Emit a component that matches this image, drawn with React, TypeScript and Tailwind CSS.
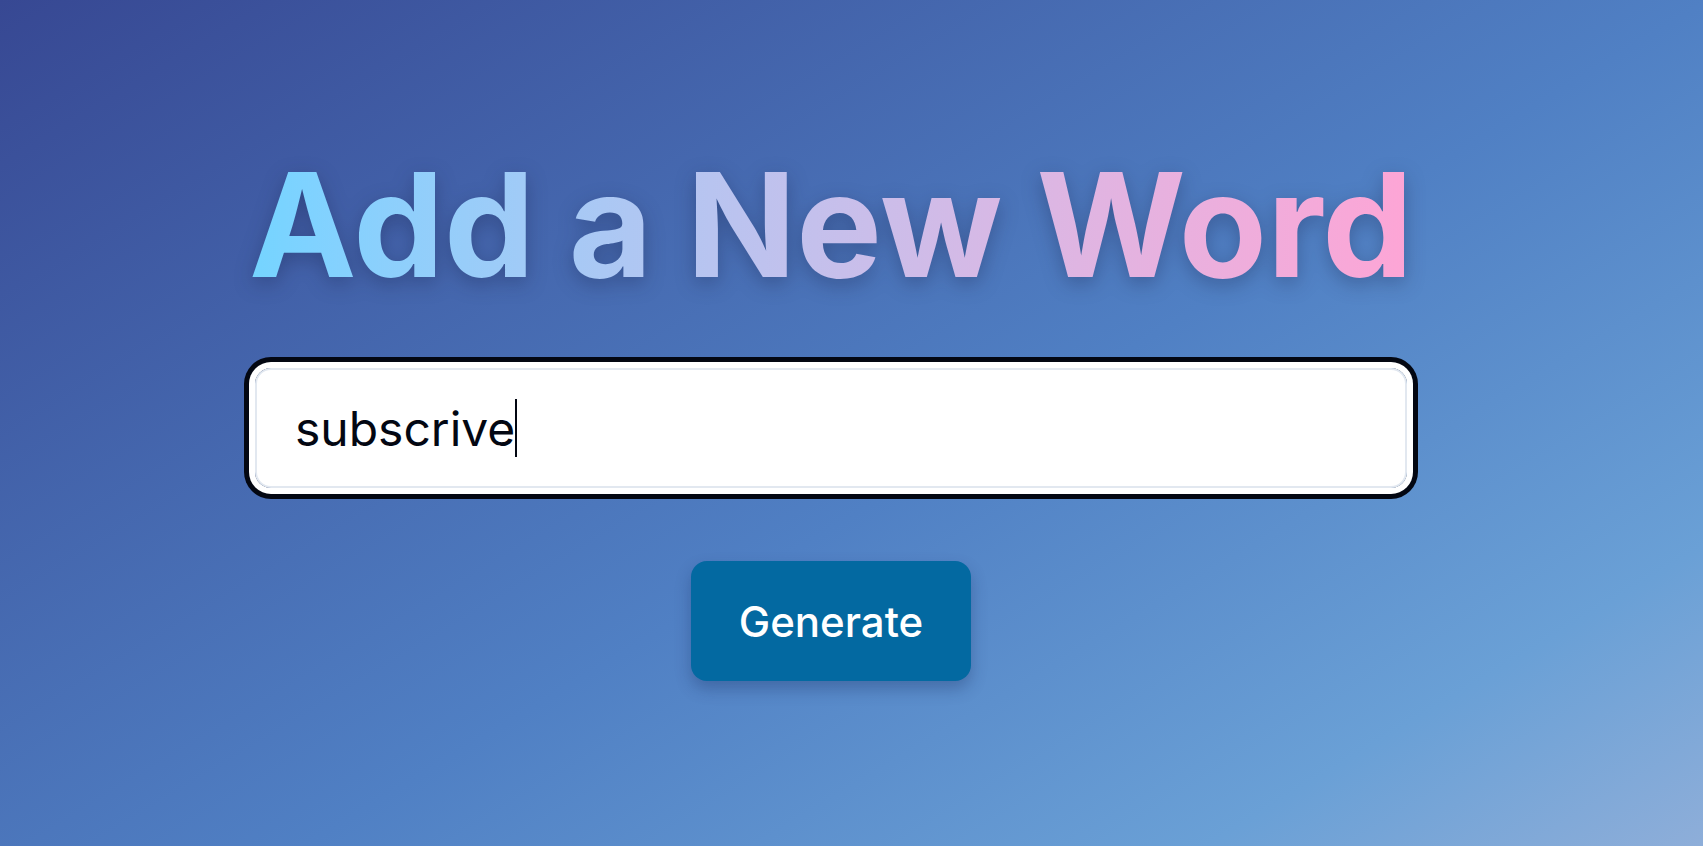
import { useState } from "react";

export default function App() {
  const [word, setWord] = useState("subscrive");

  return (
    <div className="min-h-screen w-full bg-[linear-gradient(149deg,#374893_0%,#5080c4_55%,#6aa0d6_84%,#8eaed9_100%)]">
      <div className="flex flex-col items-center pr-[41px] pt-[153px]">
        {/* Title */}
        <h1 className="bg-gradient-to-r from-sky-300 to-pink-300 bg-clip-text font-['Inter',sans-serif] text-[144px] font-bold leading-none text-transparent drop-shadow-[0_6px_10px_rgba(15,23,60,0.3)]">
          Add a New Word
        </h1>

        {/* Word input, caret drawn on top so it shows in a still frame */}
        <div className="relative mt-[71px] rounded-2xl ring-[5px] ring-gray-950 ring-offset-[6px] ring-offset-white">
          <input
            type="text"
            value={word}
            onChange={(e) => setWord(e.target.value)}
            className="block h-[120px] w-[1152px] rounded-2xl border-2 border-slate-200 bg-white pl-[38px] pr-6 font-['Inter',sans-serif] text-[48px] leading-normal text-gray-950 caret-transparent outline-none"
          />
          <div className="pointer-events-none absolute inset-0 flex items-center pl-[40px] font-['Inter',sans-serif] text-[48px] leading-normal">
            <span className="invisible whitespace-pre">{word}</span>
            <span className="h-[58px] w-[2px] bg-gray-950" />
          </div>
        </div>

        {/* Action */}
        <button
          type="button"
          className="mt-[73px] flex h-[120px] w-[280px] items-center justify-center rounded-2xl bg-[#0369a1] font-['Inter',sans-serif] text-[42px] font-medium text-white shadow-[0_8px_16px_rgba(20,40,90,0.3)]"
        >
          Generate
        </button>
      </div>
    </div>
  );
}
